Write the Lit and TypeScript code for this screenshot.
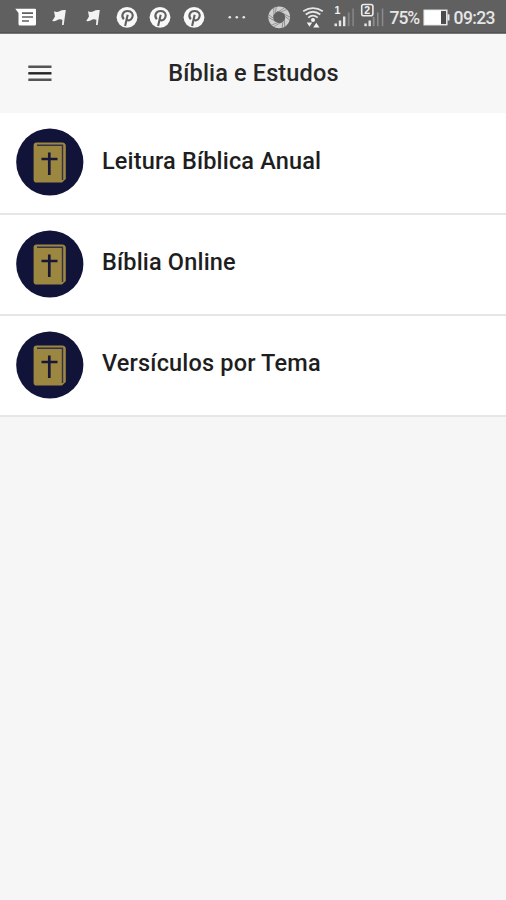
import { LitElement, html, css, svg } from "lit";
import { customElement, property } from "lit/decorators.js";

const noteIcon = html`<svg width="24" height="34" viewBox="0 0 24 34">
  <path d="M1.300 8.800H21q1 0 1 1V24q0 1.500-1.500 1.500H6Q4.500 25.500 4.500 24V13Z" fill="#fff"/>
  <path d="M8 13.200H19M8 17H19M8 21H15" stroke="#606060" stroke-width="1.700"/>
</svg>`;

const flagIcon = html`<svg width="20" height="34" viewBox="0 0 20 34">
  <path d="M5 11.300Q8 12.900 10.500 11.300Q13 9.500 16.800 10L14.700 25H13L13.400 19.700Q10 18.600 8 20.300Q5.500 21.500 3.200 21L6 16.500Z" fill="#f2f2f2"/>
</svg>`;

const pinIcon = html`<svg width="22" height="34" viewBox="0 0 22 34">
  <circle cx="11" cy="17.300" r="10.400" fill="#f8f8f8"/>
  <path d="M7.800 19.300C4.600 15.500 7.100 11 11.700 11C15.800 11 17.500 14.200 16.400 17.200C15 20.900 11.800 21.100 10.700 19.200M11.700 14.800L9.100 26" fill="none" stroke="#606060" stroke-width="2.100"/>
</svg>`;

const dotsIcon = html`<svg width="20" height="34" viewBox="0 0 20 34">
  <g fill="#e8e8e8"><circle cx="2.800" cy="17.300" r="1.300"/><circle cx="9.800" cy="17.300" r="1.300"/><circle cx="16.800" cy="17.300" r="1.300"/></g>
</svg>`;

const apertureIcon = html`<svg width="26" height="34" viewBox="0 0 26 34">
  <g transform="translate(13.200 17.300)">
    <circle r="8.200" fill="none" stroke="#d0d0d0" stroke-width="5.400"/>
    ${[0, 60, 120, 180, 240, 300].map(
      (a) => svg`<g transform="rotate(${a})" fill="none" stroke="#7c7c7c" stroke-width=".7">
        <path d="M-5 -3L5.500 -9.500M-2.500 -3.500L8 -8"/></g>`
    )}
    <path d="M-1.500-6L5-3.500L6 1.500L1.500 6L-5 3.800L-6-1.700Z" fill="#606060"/>
  </g>
</svg>`;

const wifiIcon = html`<svg width="24" height="34" viewBox="0 0 24 34">
  <g fill="none" stroke="#e6e6e6" stroke-width="1.800">
    <path d="M2.200 11.300Q12 4.800 21.800 11.300"/>
    <path d="M4.700 14.500Q12 9 19.300 14.500"/>
    <path d="M7.300 17.700Q12 13.500 16.700 17.700"/>
  </g>
  <circle cx="12" cy="20" r="2" fill="#f4f4f4"/>
  <path d="M5.800 22.500H11.200L8.500 26.800ZM15.300 22.800L18.500 27.400H12.200Z" fill="#f4f4f4"/>
</svg>`;

const signalOne = html`<svg width="27" height="34" viewBox="0 0 27 34">
  <text class="sim" x="4.500" y="14.300">1</text>
  <g fill="#e4e4e4"><rect x="4.500" y="23.500" width="2.500" height="2.700"/><rect x="8.800" y="20.500" width="2.400" height="5.700"/><rect x="13" y="16.500" width="2.400" height="9.700"/></g>
  <g fill="#858585"><rect x="17.800" y="12.500" width="1.800" height="13.700"/><rect x="22.300" y="8.500" width="1.600" height="17.700"/></g>
</svg>`;

const signalTwo = html`<svg width="30" height="34" viewBox="0 0 30 34">
  <rect x="4.700" y="4.500" width="11.200" height="11.200" rx="2" fill="none" stroke="#ececec" stroke-width="1.600"/>
  <text class="sim" x="7.300" y="14">2</text>
  <g fill="#e4e4e4"><rect x="7.300" y="23.500" width="2.500" height="2.700"/><rect x="11.500" y="20.500" width="2.400" height="5.700"/></g>
  <g fill="#8b8b8b"><rect x="15.800" y="17" width="1.800" height="9.200"/><rect x="20" y="12.500" width="1.600" height="13.700"/><rect x="24.800" y="8.500" width="1.500" height="17.700"/></g>
</svg>`;

const batteryIcon = html`<svg width="28" height="34" viewBox="0 0 28 34">
  <rect x="1.200" y="10.300" width="22.600" height="14.400" fill="#4b4b4b" stroke="#e9e9e9" stroke-width="1.500"/>
  <rect x="1.500" y="10.500" width="16.500" height="14" fill="#fff"/>
  <rect x="24.500" y="14.300" width="2" height="6.200" fill="#e9e9e9"/>
</svg>`;

@customElement("status-bar")
export class StatusBar extends LitElement {
  static styles = css`
    :host {
      display: grid;
      grid-template-columns: repeat(6, 33.6px) 52px 33px 34px 27px 30px 35px 30px 1fr;
      height: 34px;
      box-sizing: border-box;
      padding-left: 9px;
      background: linear-gradient(#606060 32px, #545454 32px 33px, #777 33px);
      color: #e6e6e6;
      font: 500 17.5px/34px Roboto, sans-serif;
      justify-items: center;
      overflow: hidden;
    }
    svg { display: block; }
    .text { justify-self: start; white-space: nowrap; padding-top: 1px; }
    .percent { padding-left: 3px; letter-spacing: -1.1px; }
    .clock { padding-left: 2px; letter-spacing: -0.6px; }
    .sim { font: 700 10.5px "Liberation Sans", sans-serif; fill: #f0f0f0; }
  `;
  render() {
    return html`${noteIcon}${flagIcon}${flagIcon}${pinIcon}${pinIcon}${pinIcon}${dotsIcon}
      ${apertureIcon}${wifiIcon}${signalOne}${signalTwo}
      <span class="text percent">75%</span>${batteryIcon}<span class="text clock">09:23</span>`;
  }
}

@customElement("app-header")
export class AppHeader extends LitElement {
  @property() heading = "";
  static styles = css`
    :host {
      display: grid;
      grid-template-columns: 80px 1fr 80px;
      align-items: center;
      height: 79.4px;
      box-sizing: border-box;
      padding-bottom: 2px;
      background: #f7f7f7;
    }
    svg { display: block; margin-left: 28px; }
    h1 {
      margin: 0;
      padding-left: 1px;
      text-align: center;
      font: 500 23.5px/32px Roboto, sans-serif;
      letter-spacing: 0.14px;
      color: #262626;
      white-space: nowrap;
    }
  `;
  render() {
    return html`
      <svg width="24" height="18" viewBox="0 0 24 18">
        <path d="M.3 2.800H23.500M.3 15.700H23.500" stroke="#555" stroke-width="2.600"/>
        <path d="M.3 9.300H23.500" stroke="#222" stroke-width="2.400"/>
      </svg>
      <h1>${this.heading}</h1>`;
  }
}

@customElement("study-item")
export class StudyItem extends LitElement {
  @property() label = "";
  static styles = css`
    :host {
      display: flex;
      align-items: center;
      gap: 18px;
      height: 101.2px;
      box-sizing: border-box;
      padding: 0 16px 1px;
      border-bottom: 2px solid #e6e6e6;
      background: #fff;
      font: 500 23.5px/32px Roboto, sans-serif;
      letter-spacing: 0.17px;
      color: #1e1e1e;
    }
    svg { display: block; flex: none; }
    .label { padding-bottom: 3px; }
  `;
  render() {
    return html`
      <svg width="68" height="68" viewBox="0 0 68 68">
        <circle cx="33.800" cy="34" r="33.600" fill="#111338"/>
        <path d="M20.500 14.500H46Q49.800 14.500 49.800 18V51L46 54.600H20.500Q17.600 54.600 17.600 51.500V17.500Q17.600 14.500 20.500 14.500Z" fill="#9c8740"/>
        <path d="M21 17.300H46.500V52" fill="none" stroke="#343047" stroke-width="1.400"/>
        <path d="M33.300 24.500V47M25.500 31H41.500" fill="none" stroke="#171739" stroke-width="2.700"/>
      </svg>
      <span class="label">${this.label}</span>`;
  }
}

@customElement("app-root")
export class AppRoot extends LitElement {
  static styles = css`
    :host { display: block; min-height: 100vh; background: #f6f6f6; }
  `;
  render() {
    return html`
      <status-bar></status-bar>
      <app-header heading="Bíblia e Estudos"></app-header>
      <main>
        ${["Leitura Bíblica Anual", "Bíblia Online", "Versículos por Tema"].map(
          (label) => html`<study-item label=${label}></study-item>`
        )}
      </main>`;
  }
}
